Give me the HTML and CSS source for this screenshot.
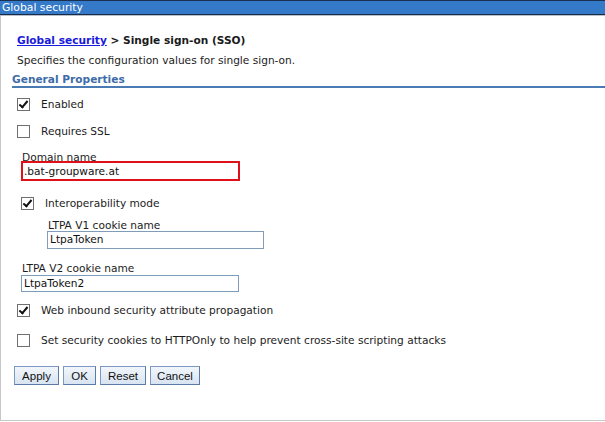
FILE: index.html
```html
<!DOCTYPE html>
<html>
<head>
<meta charset="utf-8">
<link rel="stylesheet" href="styles.css">
</head>
<body>
<div class="window">
  <div class="titlebar">Global security</div>
  <div class="content">
    <div class="crumb"><a href="#" class="link">Global security</a> &gt; Single sign-on (SSO)</div>
    <div class="desc">Specifies the configuration values for single sign-on.</div>
    <div class="section">General Properties</div>
    <div class="props">
      <label class="check row-enabled"><span class="box checked"></span><span class="lbl">Enabled</span></label>
      <label class="check row-ssl"><span class="box"></span><span class="lbl">Requires SSL</span></label>
      <div class="field field-domain">
        <div class="flabel">Domain name</div>
        <div class="input input-domain">.bat-groupware.at</div>
      </div>
      <label class="check row-interop"><span class="box checked"></span><span class="lbl">Interoperability mode</span></label>
      <div class="field field-v1">
        <div class="flabel">LTPA V1 cookie name</div>
        <div class="input input-v1">LtpaToken</div>
      </div>
      <div class="field field-v2">
        <div class="flabel">LTPA V2 cookie name</div>
        <div class="input input-v2">LtpaToken2</div>
      </div>
      <label class="check row-web"><span class="box checked"></span><span class="lbl">Web inbound security attribute propagation</span></label>
      <label class="check row-http"><span class="box"></span><span class="lbl">Set security cookies to HTTPOnly to help prevent cross-site scripting attacks</span></label>
    </div>
    <div class="buttons">
      <button class="btn btn-apply">Apply</button>
      <button class="btn btn-ok">OK</button>
      <button class="btn btn-reset">Reset</button>
      <button class="btn btn-cancel">Cancel</button>
    </div>
  </div>
</div>
</body>
</html>
```
FILE: styles.css
```css
html, body {
  margin: 0;
  padding: 0;
  background: #ffffff;
}
body {
  font-family: "DejaVu Sans", Verdana, sans-serif;
  font-size: 10.6px;
  color: #1c1c1c;
  width: 605px;
  height: 422px;
  overflow: hidden;
}
.window {
  width: 605px;
  height: 421px;
  box-sizing: border-box;
  border-left: 1px solid #c8c8c8;
  border-bottom: 1px solid #c8c8c8;
  display: flex;
  flex-direction: column;
}
.titlebar {
  height: 13px;
  background: #3579c9;
  border-top: 1px solid #1b2f4f;
  border-bottom: 1px solid #1a2a44;
  color: #ffffff;
  font-size: 10.8px;
  line-height: 13px;
  padding-left: 2px;
  margin-left: -1px;
  box-shadow: 0 1px 0 #b8c0cc;
}
.content {
  display: flex;
  flex-direction: column;
}
.crumb {
  margin-top: 18px;
  margin-left: 16px;
  font-weight: bold;
  line-height: 14px;
  color: #1a1a1a;
}
.link {
  color: #1a1adc;
  text-decoration: underline;
}
.desc {
  margin-top: 6px;
  margin-left: 16px;
  line-height: 14px;
}
.section {
  margin-top: 5px;
  margin-left: 11px;
  font-weight: bold;
  color: #3d6ca8;
  line-height: 14px;
  padding-bottom: 0;
  border-bottom: 2px solid #4a7ab4;
}
.props {
  display: flex;
  flex-direction: column;
}
.check {
  display: flex;
  align-items: center;
  height: 14px;
}
.box {
  width: 11px;
  height: 11px;
  border: 1px solid #6f6f6f;
  background: #ffffff;
  box-sizing: content-box;
  position: relative;
  flex: none;
}
.box.checked::after {
  content: "";
  position: absolute;
  left: 3px;
  top: 0px;
  width: 3px;
  height: 7px;
  border-right: 2px solid #111;
  border-bottom: 2px solid #111;
  transform: rotate(40deg);
}
.lbl {
  margin-left: 11px;
}
.row-enabled { margin-top: 9px; margin-left: 16px; }
.row-ssl { margin-top: 13px; margin-left: 16px; }
.row-interop { margin-top: 15px; margin-left: 20px; }
.row-web { margin-top: 11px; margin-left: 16px; }
.row-http { margin-top: 16px; margin-left: 16px; }
.field {
  display: flex;
  flex-direction: column;
}
.flabel {
  line-height: 13px;
}
.input {
  box-sizing: border-box;
  border: 1px solid #7f9db9;
  line-height: 15px;
  padding-left: 2px;
  color: #111;
}
.field-domain { margin-top: 13px; margin-left: 21px; }
.input-domain {
  width: 219px;
  height: 20px;
  border: 2px solid #e0101a;
  margin-left: -1px;
  margin-top: -3px;
  padding-left: 1px;
  line-height: 16px;
}
.field-v1 { margin-top: 9px; margin-left: 47px; }
.input-v1 { width: 217px; height: 18px; margin-top: -1px; margin-left: -1px; }
.field-v2 { margin-top: 13px; margin-left: 21px; }
.input-v2 { width: 218px; height: 17px; margin-top: 0; margin-left: -1px; }
.buttons {
  display: flex;
  gap: 4px;
  margin-top: 19px;
  margin-left: 13px;
}
.btn {
  font-family: "Liberation Sans", Arial, sans-serif;
  font-size: 11.5px;
  color: #111;
  height: 19px;
  padding: 0;
  border: 1px solid #7d99c0;
  border-right-color: #5a7aa8;
  border-bottom-color: #5a7aa8;
  background: linear-gradient(#f2f6fb, #d8e4f2);
  line-height: 16px;
}
.btn-apply { width: 45px; }
.btn-ok { width: 33px; }
.btn-reset { width: 46px; }
.btn-cancel { width: 50px; }
```
